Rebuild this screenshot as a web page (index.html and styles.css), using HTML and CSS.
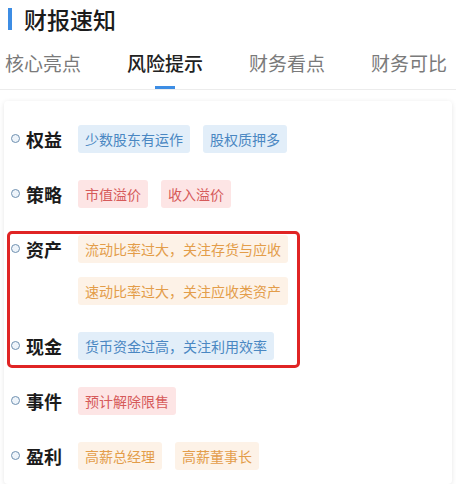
FILE: index.html
```html
<!DOCTYPE html>
<html lang="zh-CN">
<head>
  <meta charset="UTF-8" />
  <title>财报速知</title>
  <link rel="stylesheet" href="styles.css">
</head>
<body>

  <header class="titulo">
    <span class="barra"></span>
    <h1>财报速知</h1>
  </header>

  <nav class="abas">
    <span class="aba">核心亮点</span>
    <span class="aba ativa">风险提示</span>
    <span class="aba">财务看点</span>
    <span class="aba">财务可比</span>
  </nav>

  <div class="cartao">
    <div class="linha">
      <span class="ponto"></span>
      <span class="rotulo">权益</span>
      <div class="tags">
        <span class="tag azul">少数股东有运作</span>
        <span class="tag azul">股权质押多</span>
      </div>
    </div>

    <div class="linha">
      <span class="ponto"></span>
      <span class="rotulo">策略</span>
      <div class="tags">
        <span class="tag vermelho">市值溢价</span>
        <span class="tag vermelho">收入溢价</span>
      </div>
    </div>

    <div class="destaque">
      <div class="linha">
        <span class="ponto"></span>
        <span class="rotulo">资产</span>
        <div class="tags coluna">
          <span class="tag laranja">流动比率过大，关注存货与应收</span>
          <span class="tag laranja">速动比率过大，关注应收类资产</span>
        </div>
      </div>

      <div class="linha">
        <span class="ponto"></span>
        <span class="rotulo">现金</span>
        <div class="tags">
          <span class="tag azul">货币资金过高，关注利用效率</span>
        </div>
      </div>
    </div>

    <div class="linha">
      <span class="ponto"></span>
      <span class="rotulo">事件</span>
      <div class="tags">
        <span class="tag vermelho">预计解除限售</span>
      </div>
    </div>

    <div class="linha">
      <span class="ponto"></span>
      <span class="rotulo">盈利</span>
      <div class="tags">
        <span class="tag laranja">高薪总经理</span>
        <span class="tag laranja">高薪董事长</span>
      </div>
    </div>
  </div>

</body>
</html>
```

FILE: styles.css
```css
body {
  font-family: "Noto Sans CJK SC", "Noto Sans", sans-serif;
  margin: 0;
  background-color: #ffffff;
  color: #1b1b1b;
}

.titulo {
  display: flex;
  align-items: center;
  gap: 12px;
  padding: 2px 8px 0;
  height: 34px;
}

.barra {
  width: 4px;
  height: 22px;
  background-color: #3d8de4;
}

.titulo h1 {
  margin: 0;
  font-size: 23px;
  font-weight: 500;
  line-height: 34px;
}

.abas {
  display: flex;
  gap: 46px;
  padding: 0 5px;
  margin-top: 12px;
  border-bottom: 1px solid #ececec;
}

.aba {
  position: relative;
  flex-shrink: 0;
  white-space: nowrap;
  font-size: 19px;
  line-height: 30px;
  padding-bottom: 11px;
  color: #7a7a7a;
}

.aba.ativa {
  color: #222222;
  font-weight: 500;
}

.aba.ativa::after {
  content: "";
  position: absolute;
  left: 28px;
  bottom: 0;
  width: 20px;
  height: 3px;
  background-color: #3d8de4;
}

.cartao {
  display: flex;
  flex-direction: column;
  gap: 27px;
  margin: 11px 4px 0;
  padding: 24px 6px 14px;
  border-radius: 4px;
  box-shadow: 0 1px 5px rgba(0, 0, 0, 0.1);
}

.linha {
  display: flex;
  align-items: flex-start;
}

.ponto {
  width: 7px;
  height: 7px;
  margin: 9px 0 0 1px;
  border: 1.5px solid #6f90b0;
  border-radius: 50%;
  background-color: #eef4fa;
  flex-shrink: 0;
}

.rotulo {
  width: 36px;
  margin: 0 16px 0 6px;
  font-size: 18px;
  font-weight: 700;
  line-height: 28px;
  flex-shrink: 0;
}

.tags {
  display: flex;
  flex-wrap: wrap;
  gap: 14px 13px;
}

.tags.coluna {
  flex-direction: column;
  align-items: flex-start;
}

.tag {
  padding: 0 7px;
  font-size: 14px;
  line-height: 28px;
  border-radius: 3px;
  white-space: nowrap;
}

.tag.azul {
  background-color: #e2eef9;
  color: #4a87c2;
}

.tag.vermelho {
  background-color: #fde5e5;
  color: #d65a5a;
}

.tag.laranja {
  background-color: #fdf2e7;
  color: #e39d4a;
}

.destaque {
  position: relative;
  display: flex;
  flex-direction: column;
  gap: 27px;
}

.destaque::after {
  content: "";
  position: absolute;
  left: -3px;
  top: -4px;
  bottom: -8px;
  width: 287px;
  border: 3px solid #e02424;
  border-radius: 5px;
}
```
